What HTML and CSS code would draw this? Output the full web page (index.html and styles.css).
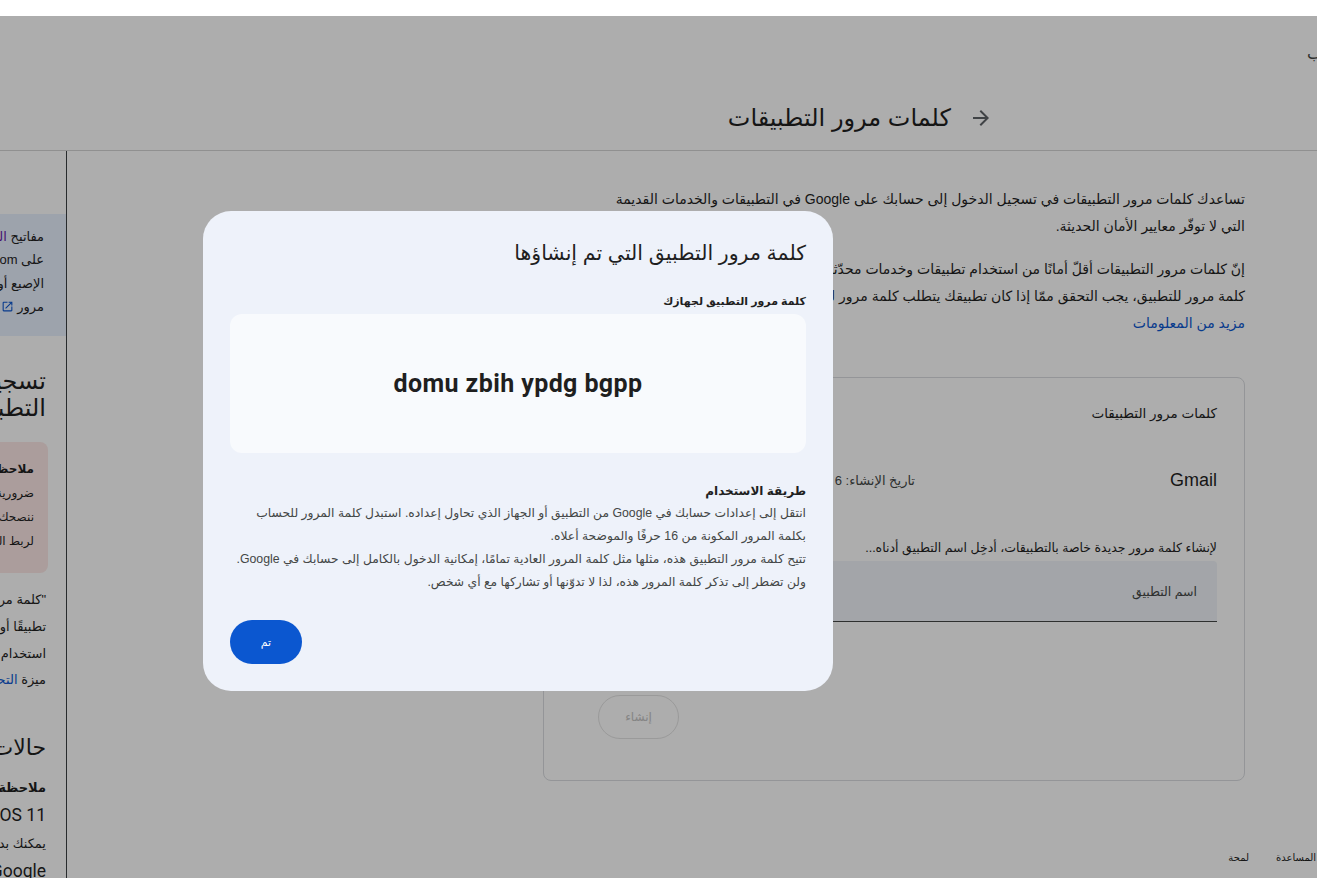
FILE: index.html
```html
<!DOCTYPE html>
<html lang="ar" dir="rtl">
<head>
<meta charset="utf-8">
<title>كلمات مرور التطبيقات</title>
<link rel="stylesheet" href="styles.css">
</head>
<body>
<div class="topbar"></div>
<div class="page">
  <header class="header">
    <div class="brand"><span class="brand-text">حساب</span></div>
    <div class="title-row">
      <svg class="back" viewBox="0 0 24 24" aria-hidden="true"><path d="M12 4l-1.41 1.41L16.17 11H4v2h12.17l-5.58 5.59L12 20l8-8z"/></svg>
      <h1 class="page-title">كلمات مرور التطبيقات</h1>
    </div>
  </header>

  <div class="body-row">
    <main class="main">
      <div class="content">
        <p class="intro">تساعدك كلمات مرور التطبيقات في تسجيل الدخول إلى حسابك على Google في التطبيقات والخدمات القديمة<br>التي لا توفّر معايير الأمان الحديثة.</p>
        <p class="intro">إنّ كلمات مرور التطبيقات أقلّ أمانًا من استخدام تطبيقات وخدمات محدّثة تستخدم معايير الأمان الحديثة. قبل إنشاء<br>كلمة مرور للتطبيق، يجب التحقق ممّا إذا كان تطبيقك يتطلب كلمة مرور لتسجيل الدخول.<br><a class="link" href="#">مزيد من المعلومات</a></p>

        <section class="card">
          <h2 class="card-title">كلمات مرور التطبيقات</h2>
          <div class="app-row">
            <span class="app-name">Gmail</span>
            <span class="app-date">تاريخ الإنشاء: 6 يونيو</span>
          </div>
          <p class="hint">لإنشاء كلمة مرور جديدة خاصة بالتطبيقات، أدخِل اسم التطبيق أدناه...</p>
          <div class="field"><span class="field-label">اسم التطبيق</span></div>
          <div class="actions"><button class="btn-outline" disabled>إنشاء</button></div>
        </section>
      </div>
      <footer class="footer">
        <a href="#">المساعدة</a>
        <a href="#">لمحة</a>
      </footer>
    </main>

    <aside class="aside">
      <div class="aside-inner">
        <div class="info-box">
          مفاتيح <span class="visited">المرور</span> هي بديل أبسط وأكثر أمانًا لكلمات المرور<br>
          على Google.com ويمكنك تسجيل الدخول باستخدام بصمة<br>
          الإصبع أو التعرّف على الوجه أو قفل الشاشة بدلاً من كلمة<br>
          مرور <svg class="ext" viewBox="0 0 24 24" aria-hidden="true"><path d="M19 19H5V5h7V3H5a2 2 0 0 0-2 2v14a2 2 0 0 0 2 2h14c1.1 0 2-.9 2-2v-7h-2v7zM14 3v2h3.59l-9.83 9.83 1.41 1.41L19 6.41V10h2V3h-7z"/></svg>
        </div>
        <h2 class="aside-h">تسجيل الدخول باستخدام كلمات مرور<br>التطبيقات</h2>
        <div class="note-box">
          <b>ملاحظة: كلمات مرور التطبيقات غير مستحسنة</b><br>
          ضرورية في معظم الحالات. للحفاظ على أمان حسابك<br>
          ننصحك باستخدام ميزة "تسجيل الدخول باستخدام Google"<br>
          لربط التطبيقات بحسابك على Google.
        </div>
        <p class="aside-p">"كلمة مرور التطبيق" هي رمز مرور مكوّن من 16 رقمًا يمنح<br>تطبيقًا أو جهازًا أقل أمانًا إذن الوصول إلى حسابك على Google<br>استخدام كلمات مرور التطبيقات متاح فقط للحسابات التي فعّلت<br>ميزة <a class="link" href="#">التحقق بخطوتين</a>.</p>
        <h2 class="aside-h2">حالات عدم إمكانية استخدام كلمات المرور</h2>
        <p class="aside-p aside-p2"><b>ملاحظة: إذا كنت تستخدم</b><br><span class="latin">iOS 11</span> أو إصدار أحدث، لن تحتاج إلى كلمة مرور<br>يمكنك بدلاً من ذلك تسجيل الدخول باستخدام<br><span class="latin">Google</span> على جهازك.</p>
      </div>
    </aside>
  </div>
</div>

<div class="scrim"></div>
<div class="dialog" role="dialog" aria-modal="true">
  <h2 class="dlg-title">كلمة مرور التطبيق التي تم إنشاؤها</h2>
  <div class="dlg-label">كلمة مرور التطبيق لجهازك</div>
  <div class="pw-box"><span class="pw" dir="ltr">domu zbih ypdg bgpp</span></div>
  <div class="howto">
    <div class="howto-title">طريقة الاستخدام</div>
    <p class="howto-text">انتقل إلى إعدادات حسابك في Google من التطبيق أو الجهاز الذي تحاول إعداده. استبدل كلمة المرور للحساب<br>بكلمة المرور المكونة من 16 حرفًا والموضحة أعلاه.</p>
    <p class="howto-text">تتيح كلمة مرور التطبيق هذه، مثلها مثل كلمة المرور العادية تمامًا، إمكانية الدخول بالكامل إلى حسابك في Google.<br>ولن تضطر إلى تذكر كلمة المرور هذه، لذا لا تدوّنها أو تشاركها مع أي شخص.</p>
  </div>
  <div class="dlg-actions"><button class="btn-done">تم</button></div>
</div>
</body>
</html>
```
FILE: styles.css
```css
* { box-sizing: border-box; }

html, body {
  margin: 0;
  padding: 0;
  height: 100%;
  overflow: hidden;
}

body {
  background: #ffffff;
  color: #1f1f1f;
  font-family: "Liberation Sans", "DejaVu Sans", sans-serif;
  direction: rtl;
}

.topbar {
  height: 16px;
  background: #ffffff;
}

.page {
  height: 862px;
  display: flex;
  flex-direction: column;
  background: #ffffff;
  overflow: hidden;
}

/* ---------- header ---------- */
.header {
  flex: 0 0 auto;
  height: 135px;
  border-bottom: 1px solid #d4d4d4;
  display: flex;
  flex-direction: column;
}

.brand {
  margin-top: 26px;
  height: 24px;
  display: flex;
}

.brand-text {
  font-size: 16px;
  line-height: 24px;
  color: #444746;
  white-space: nowrap;
  margin-right: -34px;
}

.title-row {
  margin-top: 32px;
  height: 40px;
  display: flex;
  align-items: center;
  padding-right: 324px;
  gap: 18px;
}

.back {
  width: 24px;
  height: 24px;
  fill: #5f6368;
  flex: 0 0 auto;
}

.page-title {
  margin: 0;
  font-size: 24px;
  font-weight: 400;
  color: #1f1f1f;
  white-space: nowrap;
}

/* ---------- body ---------- */
.body-row {
  flex: 1 1 auto;
  display: flex;
  min-height: 0;
}

.main {
  flex: 1 1 auto;
  display: flex;
  flex-direction: column;
  min-width: 0;
}

.content {
  width: 702px;
  margin-right: 72px;
  padding-top: 35px;
}

.intro {
  margin: 0 0 16px 0;
  font-size: 14px;
  line-height: 27px;
  color: #1f1f1f;
  white-space: nowrap;
}

.link {
  color: #0b57d0;
  text-decoration: none;
}

.card {
  margin-top: 40px;
  border: 1px solid #dadce0;
  border-radius: 8px;
  padding: 26px 27px 41px 27px;
  display: flex;
  flex-direction: column;
}

.card-title {
  margin: 0;
  font-size: 13.5px;
  font-weight: 500;
  line-height: 20px;
  color: #1f1f1f;
}

.app-row {
  margin-top: 28px;
  height: 56px;
  display: flex;
  align-items: center;
}

.app-name {
  width: 302px;
  font-size: 18px;
  color: #1f1f1f;
  font-family: "Liberation Sans", sans-serif;
}

.app-date {
  font-size: 13px;
  color: #444746;
  white-space: nowrap;
}

.hint {
  margin: 31px 0 4px 0;
  font-size: 12.5px;
  line-height: 18px;
  color: #1f1f1f;
  white-space: nowrap;
}

.field {
  height: 61px;
  background: #f0f4f9;
  border-bottom: 1px solid #444746;
  border-radius: 4px 4px 0 0;
  display: flex;
  align-items: center;
  padding-right: 20px;
}

.field-label {
  font-size: 12.5px;
  color: #444746;
}

.actions {
  margin-top: 73px;
  display: flex;
  justify-content: flex-end;
  padding-left: 27px;
}

.btn-outline {
  width: 81px;
  height: 44px;
  border: 1px solid #e3e3e3;
  border-radius: 22px;
  background: transparent;
  color: #c4c4c4;
  font-family: inherit;
  font-size: 12px;
}

.footer {
  margin-top: auto;
  height: 28px;
  padding-right: 1px;
  display: flex;
  gap: 27px;
  align-items: flex-start;
}

.footer a {
  font-size: 10px;
  line-height: 16px;
  color: #1f1f1f;
  text-decoration: none;
}

/* ---------- aside ---------- */
.aside {
  flex: 0 0 67px;
  width: 67px;
  overflow: hidden;
  border-right: 1px solid #3c4043;
  display: flex;
  justify-content: flex-start;
}

.aside-inner {
  flex: 0 0 440px;
  width: 440px;
  padding-right: 20px;
  padding-top: 63px;
}

.info-box {
  margin-right: -20px;
  padding: 11px 22px 18px 0;
  background: #e8f0fe;
  font-size: 13px;
  line-height: 23.3px;
  color: #1f1f1f;
  white-space: nowrap;
}

.visited {
  color: #681da8;
}

.ext {
  width: 13px;
  height: 13px;
  fill: #0b57d0;
  vertical-align: -2px;
}

.aside-h {
  margin: 31px 0 0 0;
  font-size: 24px;
  font-weight: 400;
  line-height: 27px;
  white-space: nowrap;
}

.note-box {
  margin: 21px -2px 0 0;
  padding: 15px 14px 20px 0;
  background: #fce8e6;
  border-radius: 8px;
  font-size: 12px;
  line-height: 24px;
  color: #1f1f1f;
  white-space: nowrap;
}

.aside-p {
  margin: 14px 0 0 0;
  font-size: 13px;
  line-height: 26.7px;
  white-space: nowrap;
}

.aside-h2 {
  margin: 39px 0 0 0;
  font-size: 22px;
  font-weight: 400;
  line-height: 30px;
  white-space: nowrap;
}

.aside-p2 {
  margin-top: 11px;
  line-height: 27.5px;
}

.latin {
  font-family: "Roboto", "Liberation Sans", sans-serif;
  font-size: 17.5px;
}

/* ---------- dialog ---------- */
.scrim {
  position: fixed;
  top: 16px;
  left: 0;
  right: 0;
  bottom: 0;
  background: rgba(0, 0, 0, 0.32);
}

.dialog {
  position: fixed;
  left: 203px;
  top: 211px;
  width: 630px;
  height: 480px;
  background: #eef2fa;
  border-radius: 28px;
  padding: 28px 27px 27px 27px;
  display: flex;
  flex-direction: column;
}

.dlg-title {
  margin: 0;
  font-size: 20.5px;
  font-weight: 400;
  line-height: 28px;
  color: #1f1f1f;
}

.dlg-label {
  margin-top: 26px;
  font-size: 11px;
  font-weight: 700;
  line-height: 16px;
  color: #1f1f1f;
}

.pw-box {
  margin-top: 5px;
  height: 139px;
  background: #f8fafd;
  border-radius: 12px;
  display: flex;
  align-items: center;
  justify-content: center;
}

.pw {
  font-family: "Roboto", "Liberation Sans", sans-serif;
  font-weight: 700;
  font-size: 25px;
  color: #1f1f1f;
  letter-spacing: 0.4px;
}

.howto {
  margin-top: 28px;
}

.howto-title {
  font-size: 12px;
  font-weight: 700;
  line-height: 20px;
  color: #1f1f1f;
}

.howto-text {
  margin: 1px 0 0 0;
  font-size: 12.3px;
  line-height: 22.5px;
  color: #444746;
  white-space: nowrap;
}

.dlg-actions {
  margin-top: 27px;
  display: flex;
  justify-content: flex-end;
}

.btn-done {
  width: 72px;
  height: 44px;
  border: none;
  border-radius: 22px;
  background: #0b57d0;
  color: #ffffff;
  font-family: inherit;
  font-size: 11px;
}
```
